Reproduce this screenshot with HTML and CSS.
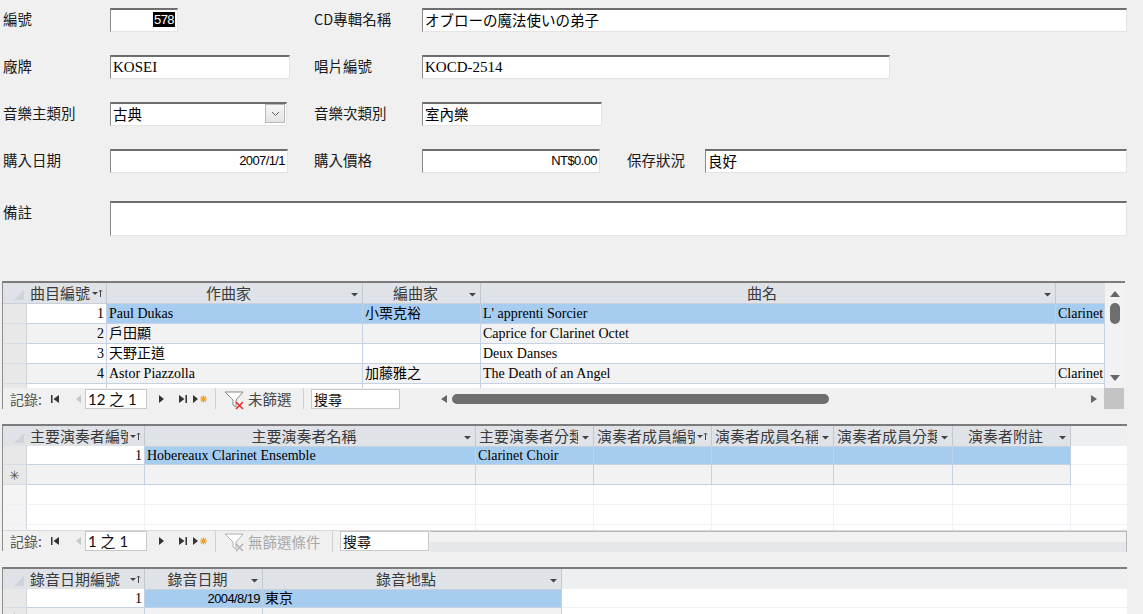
FILE: index.html
```html
<!DOCTYPE html>
<html>
<head>
<meta charset="utf-8">
<link rel="stylesheet" href="styles.css">
</head>
<body>
<div class="form">
  <div class="lbl">編號</div>
  <div class="cell"><div class="fld w68 right num"><span class="selt">578</span></div></div>
  <div class="lbl">CD專輯名稱</div>
  <div class="cell"><div class="fld wfull cjk">オブローの魔法使いの弟子</div></div>

  <div class="lbl">廠牌</div>
  <div class="cell"><div class="fld w180 serif">KOSEI</div></div>
  <div class="lbl">唱片編號</div>
  <div class="cell"><div class="fld w468 serif">KOCD-2514</div></div>

  <div class="lbl">音樂主類別</div>
  <div class="cell"><div class="fld w177 cjk combo"><span>古典</span><span class="ddbtn"><svg width="9" height="6" viewBox="0 0 9 6"><path d="M1 1 L4.5 4.5 L8 1" fill="none" stroke="#606060" stroke-width="1"/></svg></span></div></div>
  <div class="lbl">音樂次類別</div>
  <div class="cell"><div class="fld w180 cjk">室內樂</div></div>

  <div class="lbl">購入日期</div>
  <div class="cell"><div class="fld w178 right num">2007/1/1</div></div>
  <div class="lbl">購入價格</div>
  <div class="cell split">
    <div class="fld w178 right num">NT$0.00</div>
    <div class="lbl lbl3">保存狀況</div>
    <div class="fld grow cjk">良好</div>
  </div>

  <div class="lbl lbl5">備註</div>
  <div class="cell span3"><div class="fld memo"></div></div>
</div>

<!-- Subform 1 -->
<div class="ds ds1">
  <div class="ds-main">
    <div class="ds-grid">
      <div class="hrow g1">
        <div class="hc corner"><svg width="12" height="12" viewBox="0 0 12 12"><path d="M11 1 L11 11 L1 11 Z" fill="#d0d4da"/></svg></div>
        <div class="hc lefth"><span class="ht tr">曲目編號</span><svg class="sorti" width="12" height="10" viewBox="0 0 12 10"><path d="M1 4 L7 4 L4 7 Z" fill="#444"/><path d="M9.5 9 L9.5 2 M8 3.5 L9.5 2 L11 3.5" stroke="#444" stroke-width="1" fill="none"/></svg></div>
        <div class="hc"><span class="ht c">作曲家</span><svg class="ddi" width="9" height="5" viewBox="0 0 9 5"><path d="M1 1 L8 1 L4.5 4.5 Z" fill="#444"/></svg></div>
        <div class="hc"><span class="ht c">編曲家</span><svg class="ddi" width="9" height="5" viewBox="0 0 9 5"><path d="M1 1 L8 1 L4.5 4.5 Z" fill="#444"/></svg></div>
        <div class="hc"><span class="ht c">曲名</span><svg class="ddi" width="9" height="5" viewBox="0 0 9 5"><path d="M1 1 L8 1 L4.5 4.5 Z" fill="#444"/></svg></div>
        <div class="hc nob"></div>
      </div>
      <div class="body b1">
        <div class="drow g1 selr">
          <div class="sc"></div><div class="dc num cur">1</div><div class="dc">Paul Dukas</div><div class="dc">小栗克裕</div><div class="dc">L' apprenti Sorcier</div><div class="dc">Clarinet</div>
        </div>
        <div class="drow g1 alt">
          <div class="sc"></div><div class="dc num">2</div><div class="dc">戶田顯</div><div class="dc"></div><div class="dc">Caprice for Clarinet Octet</div><div class="dc"></div>
        </div>
        <div class="drow g1">
          <div class="sc"></div><div class="dc num">3</div><div class="dc">天野正道</div><div class="dc"></div><div class="dc">Deux Danses</div><div class="dc"></div>
        </div>
        <div class="drow g1 alt">
          <div class="sc"></div><div class="dc num">4</div><div class="dc">Astor Piazzolla</div><div class="dc">加藤雅之</div><div class="dc">The Death of an Angel</div><div class="dc">Clarinet</div>
        </div>
        <div class="drow g1">
          <div class="sc"></div><div class="dc"></div><div class="dc"></div><div class="dc"></div><div class="dc"></div><div class="dc"></div>
        </div>
      </div>
    </div>
    <div class="vscroll">
      <svg width="12" height="8" viewBox="0 0 12 8"><path d="M1 7 L6 1 L11 7 Z" fill="#666"/></svg>
      <div class="vthumb"></div>
      <div class="vspace"></div>
      <svg width="12" height="8" viewBox="0 0 12 8"><path d="M1 1 L11 1 L6 7 Z" fill="#666"/></svg>
    </div>
  </div>
  <div class="nav">
    <span class="navlbl">記錄:</span>
    <svg class="ni first" width="10" height="10" viewBox="0 0 10 10"><rect x="1" y="1" width="1.5" height="8" fill="#333"/><path d="M9 1 L3.5 5 L9 9 Z" fill="#333"/></svg>
    <svg class="ni prev" width="8" height="10" viewBox="0 0 8 10"><path d="M7 1 L2 5 L7 9 Z" fill="#c8c8c8"/></svg>
    <div class="navbox">12 之 1</div>
    <svg class="ni next" width="8" height="10" viewBox="0 0 8 10"><path d="M1 1 L6 5 L1 9 Z" fill="#333"/></svg>
    <svg class="ni last" width="10" height="10" viewBox="0 0 10 10"><path d="M1 1 L6.5 5 L1 9 Z" fill="#333"/><rect x="7.5" y="1" width="1.5" height="8" fill="#333"/></svg>
    <svg class="ni new" width="16" height="10" viewBox="0 0 16 10"><path d="M1 1 L6 5 L1 9 Z" fill="#333"/><path d="M11.5 1.5 V8.5 M8 5 H15 M9 2.5 L14 7.5 M14 2.5 L9 7.5" stroke="#f0a030" stroke-width="1.2"/></svg>
    <span class="nsep"></span>
    <svg class="ni filt" width="22" height="20" viewBox="0 0 22 20"><path d="M1 2 L19 2 L12 10 L12 17 L9 15 L9 10 Z" fill="#fff" stroke="#888" stroke-width="1"/><path d="M12 12 L19 19 M19 12 L12 19" stroke="#e03030" stroke-width="1.6"/></svg>
    <span class="ftxt">未篩選</span>
    <span class="nsep s2"></span>
    <div class="search">搜尋</div>
    <div class="hscroll">
      <svg width="8" height="10" viewBox="0 0 8 10"><path d="M7 1 L1 5 L7 9 Z" fill="#666"/></svg>
      <div class="hthumb"></div>
      <div class="hspace"></div>
      <svg width="8" height="10" viewBox="0 0 8 10"><path d="M1 1 L7 5 L1 9 Z" fill="#666"/></svg>
    </div>
    <div class="scorner"></div>
  </div>
</div>

<!-- Subform 2 -->
<div class="ds ds2">
  <div class="ds-grid">
    <div class="hrow g2">
      <div class="hc corner"><svg width="12" height="12" viewBox="0 0 12 12"><path d="M11 1 L11 11 L1 11 Z" fill="#d0d4da"/></svg></div>
      <div class="hc lefth"><span class="ht tr">主要演奏者編號</span><svg class="sorti" width="12" height="10" viewBox="0 0 12 10"><path d="M1 4 L7 4 L4 7 Z" fill="#444"/><path d="M9.5 9 L9.5 2 M8 3.5 L9.5 2 L11 3.5" stroke="#444" stroke-width="1" fill="none"/></svg></div>
      <div class="hc"><span class="ht c">主要演奏者名稱</span><svg class="ddi" width="9" height="5" viewBox="0 0 9 5"><path d="M1 1 L8 1 L4.5 4.5 Z" fill="#444"/></svg></div>
      <div class="hc lefth"><span class="ht tr">主要演奏者分類</span><svg class="ddi" width="9" height="5" viewBox="0 0 9 5"><path d="M1 1 L8 1 L4.5 4.5 Z" fill="#444"/></svg></div>
      <div class="hc lefth"><span class="ht tr">演奏者成員編號</span><svg class="sorti" width="12" height="10" viewBox="0 0 12 10"><path d="M1 4 L7 4 L4 7 Z" fill="#444"/><path d="M9.5 9 L9.5 2 M8 3.5 L9.5 2 L11 3.5" stroke="#444" stroke-width="1" fill="none"/></svg></div>
      <div class="hc lefth"><span class="ht tr">演奏者成員名稱</span><svg class="ddi" width="9" height="5" viewBox="0 0 9 5"><path d="M1 1 L8 1 L4.5 4.5 Z" fill="#444"/></svg></div>
      <div class="hc lefth"><span class="ht tr">演奏者成員分類</span><svg class="ddi" width="9" height="5" viewBox="0 0 9 5"><path d="M1 1 L8 1 L4.5 4.5 Z" fill="#444"/></svg></div>
      <div class="hc"><span class="ht c">演奏者附註</span><svg class="ddi" width="9" height="5" viewBox="0 0 9 5"><path d="M1 1 L8 1 L4.5 4.5 Z" fill="#444"/></svg></div>
      <div class="hc fill"></div>
    </div>
    <div class="body b2">
      <div class="drow g2 selr">
        <div class="sc"></div><div class="dc num cur">1</div><div class="dc">Hobereaux Clarinet Ensemble</div><div class="dc">Clarinet Choir</div><div class="dc"></div><div class="dc"></div><div class="dc"></div><div class="dc"></div><div class="dc fillc"></div>
      </div>
      <div class="drow g2 alt">
        <div class="sc star">✳</div><div class="dc"></div><div class="dc"></div><div class="dc"></div><div class="dc"></div><div class="dc"></div><div class="dc"></div><div class="dc"></div><div class="dc fillc"></div>
      </div>
      <div class="drow g2 empty">
        <div class="sc"></div><div class="dc"></div><div class="dc"></div><div class="dc"></div><div class="dc"></div><div class="dc"></div><div class="dc"></div><div class="dc"></div><div class="dc fillc"></div>
      </div>
      <div class="drow g2 empty">
        <div class="sc"></div><div class="dc"></div><div class="dc"></div><div class="dc"></div><div class="dc"></div><div class="dc"></div><div class="dc"></div><div class="dc"></div><div class="dc fillc"></div>
      </div>
      <div class="drow g2 empty">
        <div class="sc"></div><div class="dc"></div><div class="dc"></div><div class="dc"></div><div class="dc"></div><div class="dc"></div><div class="dc"></div><div class="dc"></div><div class="dc fillc"></div>
      </div>
    </div>
  </div>
  <div class="nav">
    <span class="navlbl">記錄:</span>
    <svg class="ni first" width="10" height="10" viewBox="0 0 10 10"><rect x="1" y="1" width="1.5" height="8" fill="#333"/><path d="M9 1 L3.5 5 L9 9 Z" fill="#333"/></svg>
    <svg class="ni prev" width="8" height="10" viewBox="0 0 8 10"><path d="M7 1 L2 5 L7 9 Z" fill="#c8c8c8"/></svg>
    <div class="navbox">1 之 1</div>
    <svg class="ni next" width="8" height="10" viewBox="0 0 8 10"><path d="M1 1 L6 5 L1 9 Z" fill="#333"/></svg>
    <svg class="ni last" width="10" height="10" viewBox="0 0 10 10"><path d="M1 1 L6.5 5 L1 9 Z" fill="#333"/><rect x="7.5" y="1" width="1.5" height="8" fill="#333"/></svg>
    <svg class="ni new" width="16" height="10" viewBox="0 0 16 10"><path d="M1 1 L6 5 L1 9 Z" fill="#333"/><path d="M11.5 1.5 V8.5 M8 5 H15 M9 2.5 L14 7.5 M14 2.5 L9 7.5" stroke="#f0a030" stroke-width="1.2"/></svg>
    <span class="nsep"></span>
    <svg class="ni filt" width="22" height="20" viewBox="0 0 22 20"><path d="M1 2 L19 2 L12 10 L12 17 L9 15 L9 10 Z" fill="#fff" stroke="#b0b0b0" stroke-width="1"/><path d="M12 12 L19 19 M19 12 L12 19" stroke="#b0b0b0" stroke-width="1.4"/></svg>
    <span class="ftxt dis">無篩選條件</span>
    <span class="nsep s3"></span>
    <div class="search">搜尋</div>
    <div class="hempty"></div>
  </div>
</div>

<!-- Subform 3 -->
<div class="ds ds3">
  <div class="ds-grid">
    <div class="hrow g3">
      <div class="hc corner"><svg width="12" height="12" viewBox="0 0 12 12"><path d="M11 1 L11 11 L1 11 Z" fill="#d0d4da"/></svg></div>
      <div class="hc lefth"><span class="ht tr">錄音日期編號</span><svg class="sorti" width="12" height="10" viewBox="0 0 12 10"><path d="M1 4 L7 4 L4 7 Z" fill="#444"/><path d="M9.5 9 L9.5 2 M8 3.5 L9.5 2 L11 3.5" stroke="#444" stroke-width="1" fill="none"/></svg></div>
      <div class="hc"><span class="ht c">錄音日期</span><svg class="ddi" width="9" height="5" viewBox="0 0 9 5"><path d="M1 1 L8 1 L4.5 4.5 Z" fill="#444"/></svg></div>
      <div class="hc"><span class="ht c">錄音地點</span><svg class="ddi" width="9" height="5" viewBox="0 0 9 5"><path d="M1 1 L8 1 L4.5 4.5 Z" fill="#444"/></svg></div>
      <div class="hc fill"></div>
    </div>
    <div class="body b3">
      <div class="drow g3 selr">
        <div class="sc"></div><div class="dc num cur">1</div><div class="dc num nar">2004/8/19</div><div class="dc">東京</div><div class="dc fillc"></div>
      </div>
      <div class="drow g3 alt">
        <div class="sc star">✳</div><div class="dc"></div><div class="dc"></div><div class="dc"></div><div class="dc fillc"></div>
      </div>
    </div>
  </div>
</div>
</body>
</html>
```

FILE: styles.css
```css
* { box-sizing: border-box; }
html, body { margin: 0; padding: 0; }
body {
  width: 1143px;
  height: 614px;
  overflow: hidden;
  background: #f0f0f0;
  font-family: "Noto Sans CJK TC", "Noto Sans", sans-serif;
  font-size: 14px;
  color: #222;
}

/* ---------- main form ---------- */
.form {
  display: grid;
  grid-template-columns: 107px 204px 108px 705px;
  grid-template-rows: 24px 24px 24px 24px 40px;
  row-gap: 23px;
  padding: 8px 0 0 3px;
}
.lbl {
  font-size: 14.5px;
  line-height: 20px;
  color: #1a1a1a;
  padding-top: 1px;
  white-space: nowrap;
}
.lbl5 { margin-top: 5px; }
.cell { display: flex; align-items: flex-start; }
.span3 { grid-column: 2 / 5; margin-top: 5px; }

.fld {
  height: 24px;
  background: #fff;
  border-top: 2px solid #6e6e6e;
  border-left: 1px solid #8a8a8a;
  border-right: 1px solid #e4e4e4;
  border-bottom: 1px solid #e4e4e4;
  padding: 0 2px;
  line-height: 20px;
  font-size: 14.5px;
  color: #000;
  white-space: nowrap;
  overflow: hidden;
}
.fld.cjk { font-family: "Noto Sans CJK TC", sans-serif; }
.fld.serif { font-family: "Liberation Serif", "Noto Sans CJK TC", serif; font-size: 15px; }
.fld.num { font-family: "Liberation Sans", sans-serif; font-size: 13px; letter-spacing: -0.6px; }
.fld.right { text-align: right; padding-right: 2px; }
.w68 { width: 68px; }
.w180 { width: 180px; }
.w177 { width: 177px; }
.w178 { width: 178px; }
.w468 { width: 468px; }
.wfull { width: 705px; }
.grow { width: 422px; }
.lbl3 { width: 105px; padding-left: 27px; }
.memo { width: 1017px; height: 35px; }
.selt { background: #000; color: #fff; padding: 0 1px; }

.combo { display: flex; justify-content: space-between; align-items: flex-start; padding-right: 1px; }
.ddbtn {
  width: 20px;
  height: 19px;
  border: 1px solid #b8b8b8;
  background: linear-gradient(#f6f6f6, #e4e4e4);
  display: flex;
  align-items: center;
  justify-content: center;
}

/* ---------- datasheets ---------- */
.ds {
  margin-left: 2px;
  border-left: 1px solid #8c8c8c;
  border-top: 2px solid #7c7c7c;
}
.ds1 { margin-top: 45px; width: 1123px; }
.ds2 { margin-top: 15px; width: 1125px; }
.ds3 { margin-top: 16px; width: 1125px; }

.ds-main { display: flex; }
.ds-grid { flex: none; }

.g1 { display: grid; grid-template-columns: 24px 80px 256px 118px 575px 49px; }
.g2 { display: grid; grid-template-columns: 24px 118px 331px 118px 118px 122px 119px 118px 56px; }
.g3 { display: grid; grid-template-columns: 24px 118px 118px 299px 565px; }

.hrow { height: 21px; background: #dfe2e7; }
.ds2 .hrow, .ds3 .hrow { height: 20px; }
.hc {
  display: flex;
  align-items: center;
  border-right: 1px solid #c3c9d1;
  border-bottom: 1px solid #c8d0dc;
  font-size: 15px;
  color: #3a3a3a;
  line-height: 20px;
  white-space: nowrap;
  padding: 0 3px;
  min-width: 0;
}
.hc.corner { justify-content: flex-end; align-items: flex-end; padding: 0 2px 2px 0; border-right: none; }
.hc.nob { border-right: none; }
.hc.fill { background: #eeeff1; border-right: none; border-bottom: 1px solid #e4e6ea; }
.ht { flex: 1; min-width: 0; }
.ht.tr { overflow: hidden; }
.ht.c { text-align: center; }
.lefth .ht { text-align: left; }
.ddi { flex: none; margin-left: 3px; margin-top: 2px; }
.sorti { flex: none; margin-left: 1px; }

.body { overflow: hidden; background: #fff; }
.b1 { height: 84px; }
.b2 { height: 84px; }
.b3 { height: 40px; }

.drow { height: 20px; background: #fff; }
.ds2 .drow:first-child, .ds3 .drow:first-child { height: 19px; }
.drow.alt { background: #f2f2f2; }
.drow.selr { background: #a6cdf0; }
.dc {
  font-family: "Liberation Serif", "Noto Sans CJK TC", serif;
  font-size: 14px;
  line-height: 19px;
  color: #000;
  padding: 0 2px;
  border-right: 1px solid #c5d2e4;
  border-bottom: 1px solid #c5d2e4;
  white-space: nowrap;
  overflow: hidden;
}
.dc.num { text-align: right; }
.dc.cur { background: #fff; }
.dc.nar { font-family: "Liberation Sans", sans-serif; font-size: 13px; letter-spacing: -0.6px; }
.dc.fillc { background: #fff; border-right: none; border-bottom: 1px solid #eef1f5; }
.drow.empty .dc { border-color: #eef1f6; }
.sc {
  background: #e8e8e8;
  border-right: 1px solid #cfd6de;
  border-bottom: 1px solid #d6dce4;
  font-size: 12px;
  color: #555;
  text-align: center;
  line-height: 19px;
}
.drow.empty .sc { background: #f4f4f4; border-bottom-color: #f0f0f0; }
.sc.star { font-size: 13px; }

.vscroll {
  width: 20px;
  height: 105px;
  background: #f2f2f2;
  display: flex;
  flex-direction: column;
  align-items: center;
  padding: 7px 0 6px;
}
.vthumb { width: 10px; height: 21px; margin-top: 5px; background: #6e6e6e; border-radius: 5px; }
.vspace { flex: 1; }

/* ---------- navigation bar ---------- */
.nav {
  height: 21px;
  display: flex;
  align-items: center;
  background: #f0f0f0;
  border-top: 1px solid #d8d8d8;
  font-size: 14px;
}
.ds1 .nav { border-top: none; }
.navlbl { color: #555; margin-left: 7px; width: 40px; }
.ni { flex: none; }
.ni.prev { margin-left: 14px; }
.navbox {
  width: 62px;
  height: 20px;
  margin-left: 3px;
  background: #fff;
  border: 1px solid #c8c8c8;
  font-family: "Lato", "Noto Sans CJK TC", sans-serif;
  font-size: 15px;
  line-height: 18px;
  padding-left: 2px;
  color: #111;
}
.ni.next { margin-left: 11px; }
.ni.last { margin-left: 12px; }
.ni.new { margin-left: 4px; }
.nsep { width: 1px; height: 21px; background: #d0d0d0; margin-left: 7px; }
.ni.filt { margin-left: 8px; margin-top: 2px; }
.ftxt { color: #444; margin-left: 2px; width: 55px; font-size: 14.5px; }
.ftxt.dis { color: #a8a8a8; width: 84px; }
.nsep.s2, .nsep.s3 { margin-left: 0; }
.search {
  width: 89px;
  height: 20px;
  margin-left: 7px;
  background: #fff;
  border: 1px solid #c8c8c8;
  line-height: 18px;
  padding-left: 2px;
  color: #111;
}
.hscroll {
  width: 668px;
  height: 21px;
  margin-left: 36px;
  display: flex;
  align-items: center;
  padding: 0 6px 0 4px;
  background: #f0f0f0;
}
.hthumb { width: 377px; height: 10px; margin-left: 4px; background: #6e6e6e; border-radius: 5px; }
.hspace { flex: 1; }
.scorner { width: 20px; height: 21px; background: #c4c4c4; }
.hempty {
  flex: 1;
  height: 21px;
  margin-left: 1px;
  border-top: 1px solid #b8b8b8;
  border-right: 1px solid #b8b8b8;
  background: linear-gradient(#f2f2f2 0 50%, #e6e7ea 50% 100%);
}
```
